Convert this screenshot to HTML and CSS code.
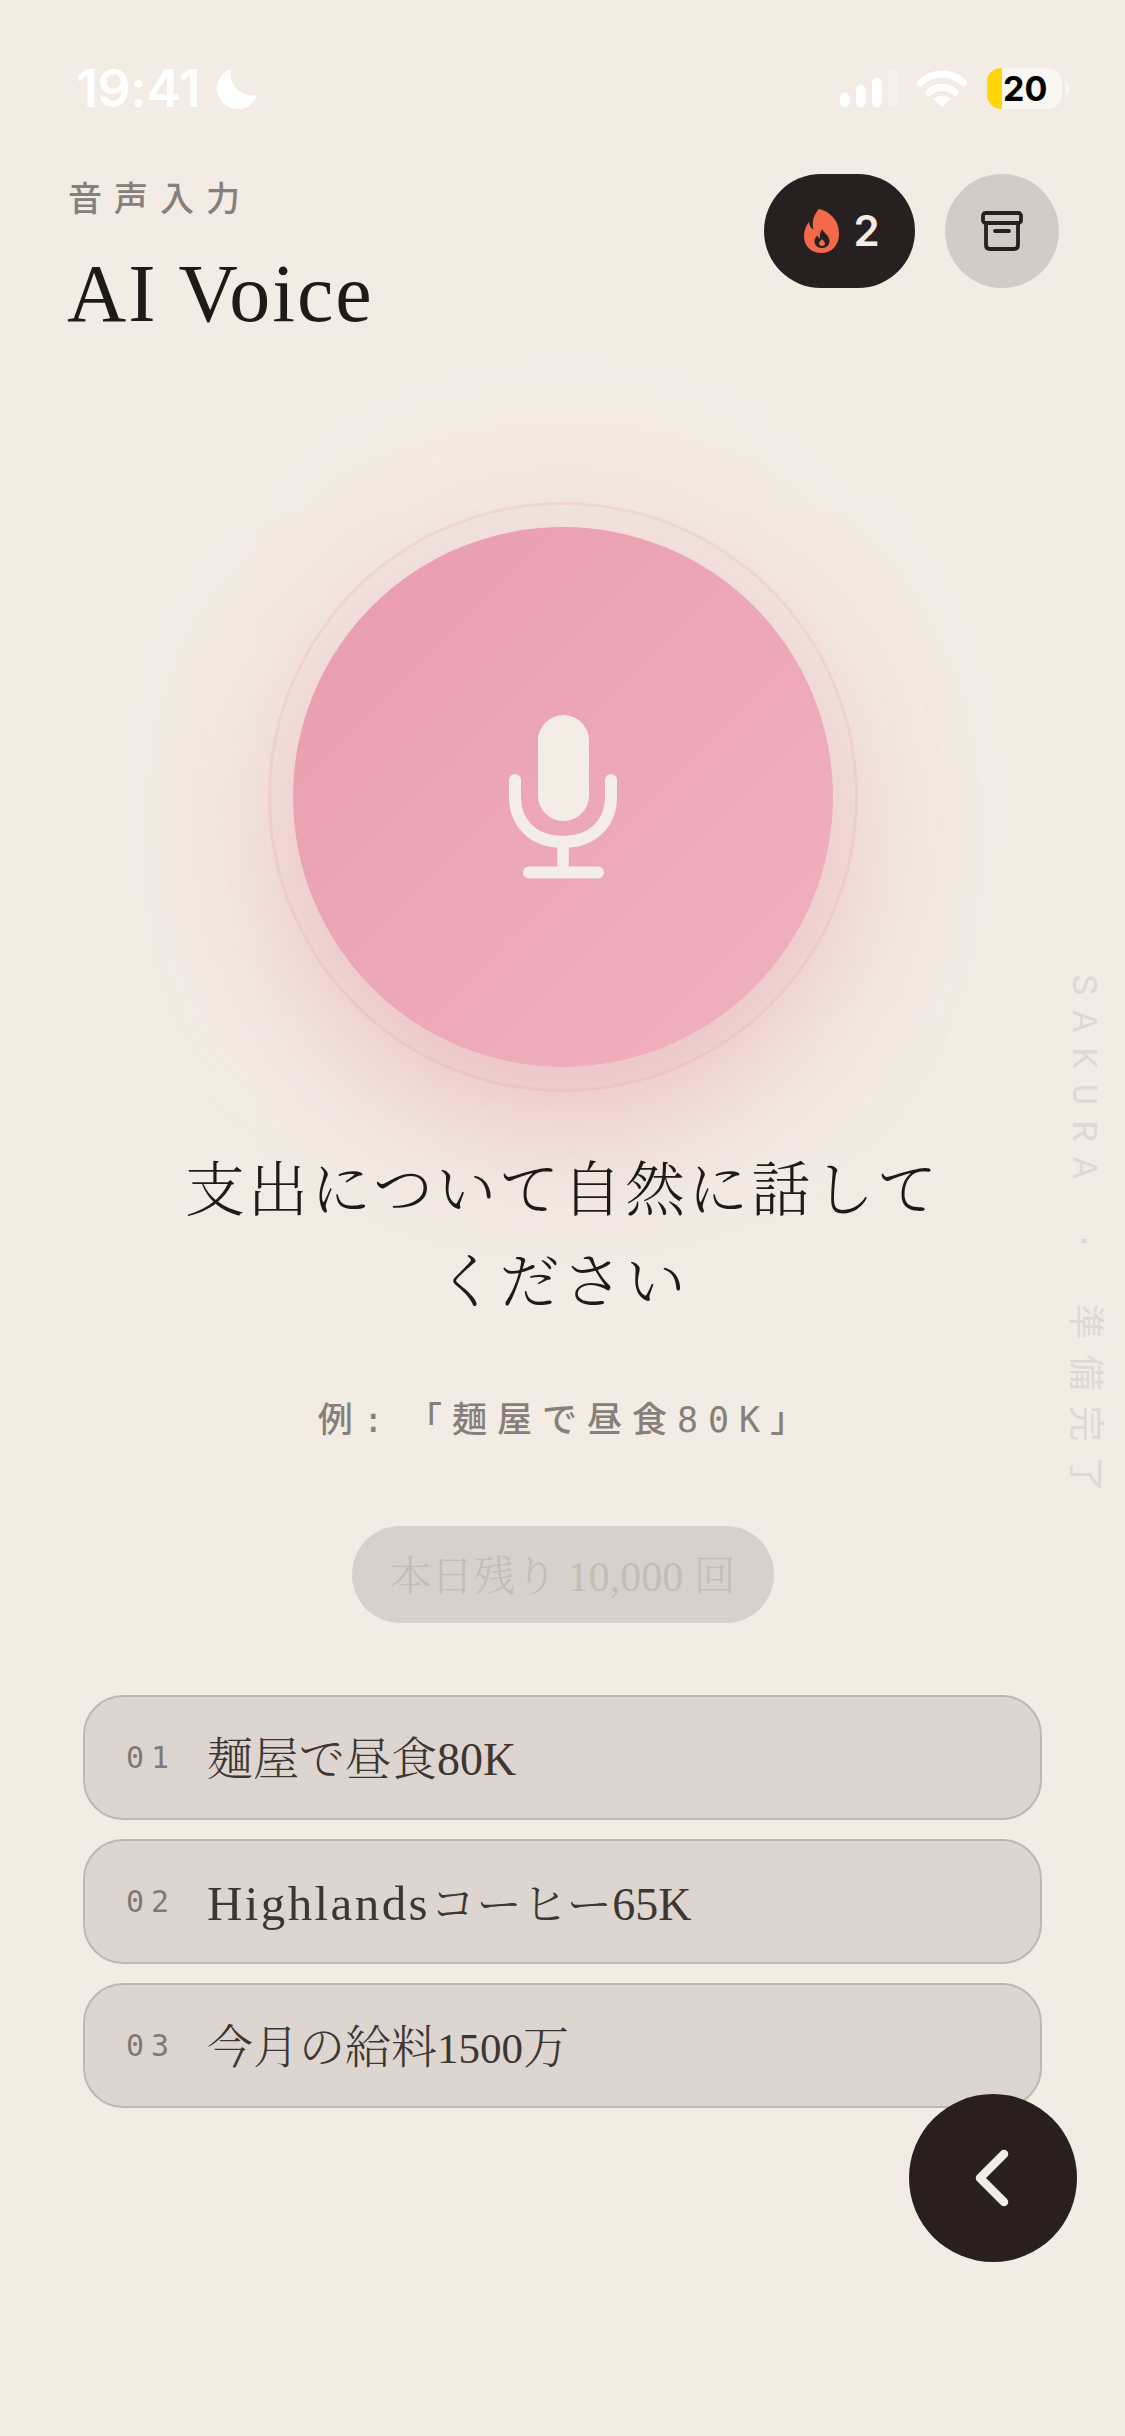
FILE: index.html
```html
<!DOCTYPE html>
<html lang="ja">
<head>
<meta charset="utf-8">
<title>AI Voice</title>
<link rel="stylesheet" href="styles.css">
</head>
<body>
<div class="screen">
  <div class="status">
    <div class="status-left">
      <span class="time">19:41</span>
      <svg class="moon" width="40" height="40" viewBox="0 0 40 40"><path d="M14 0A20.500 20.500 0 1 0 40 26 22 22 0 0 1 14 0Z" fill="#fff"/></svg>
    </div>
    <div class="status-right">
      <svg class="signal" width="58" height="37" viewBox="0 0 58 37">
        <rect x="0" y="23" width="10" height="14" rx="5" fill="#fff"/>
        <rect x="16" y="15" width="10" height="22" rx="5" fill="#fff"/>
        <rect x="32" y="8" width="10" height="29" rx="5" fill="#fff"/>
        <rect x="48" y="0" width="10" height="37" rx="5" fill="#fff" opacity=".35"/>
      </svg>
      <svg class="wifi" width="50" height="37" viewBox="0 0 50 37" fill="none">
        <path d="M3.500 13C15 1 35 1 46.500 13" stroke="#fff" stroke-width="7" stroke-linecap="round"/>
        <path d="M12 22.500C19 15.500 31 15.500 38 22.500" stroke="#fff" stroke-width="7" stroke-linecap="round"/>
        <path d="M25 37L16.500 29C21 24.500 29 24.500 33.500 29Z" fill="#fff"/>
      </svg>
      <div class="battery"><span class="battery-level"></span><span class="battery-text">20</span></div>
      <span class="battery-nub"></span>
    </div>
  </div>

  <header class="header">
    <div class="titles">
      <div class="eyebrow">音声入力</div>
      <h1 class="title">AI Voice</h1>
    </div>
    <div class="actions">
      <div class="streak">
        <svg width="36" height="44" viewBox="0 0 36 44"><path d="M15 0C21 1 36 8 35 26 34.500 37 27 44 17.500 44 7 44 0 37 0 27 0 20 4 14 5 13 5.500 17 7 19.500 9.500 20.500 7.500 13 10 5 15 0Z" fill="#f4694a"/><path d="M18.500 20C19 24 25.500 26 25.500 32 25.500 36.500 22 39 18 39 14 39 10.500 36.500 10.500 32.500 10.500 29.500 12 27.500 13.500 26.500 14 28.500 15 29.500 16 29.500 15.500 26 16 22.500 18.500 20Z" fill="#272020"/><path d="M18 30C19.500 31.500 21 33 21 34.500 21 36 19.800 37 18 37 16.200 37 15 36 15 34.500 15 33 16.500 31.500 18 30Z" fill="#f4694a"/></svg>
        <span class="streak-count">2</span>
      </div>
      <div class="archive">
        <svg width="42" height="40" viewBox="0 0 42 40" fill="none" stroke="#272020" stroke-width="3.800" stroke-linejoin="round" stroke-linecap="round"><rect x="2" y="2" width="38" height="10" rx="2.500"/><path d="M5 12V34C5 36.500 6.500 38 9 38H33C35.500 38 37 36.500 37 34V12"/><path d="M14 20H28"/></svg>
      </div>
    </div>
  </header>

  <main class="main">
    <div class="ring">
      <div class="mic-button">
        <svg width="108" height="164" viewBox="0 0 108 164" fill="none">
          <rect x="29" y="0" width="51" height="106" rx="25.500" fill="#f4ede6"/>
          <path d="M6 65V82C6 108 24 127 54 127 84 127 102 108 102 82V65" stroke="#f4ede6" stroke-width="12" stroke-linecap="round"/>
          <path d="M54 127V157" stroke="#f4ede6" stroke-width="11.500"/>
          <path d="M20 157.500H89" stroke="#f4ede6" stroke-width="12" stroke-linecap="round"/>
        </svg>
      </div>
    </div>
    <h2 class="prompt">支出について自然に話して<br>ください</h2>
    <p class="example">例: 「麺屋で昼食80K」</p>
    <div class="quota">本日残り 10,000 回</div>
    <ul class="samples">
      <li class="sample"><span class="num">01</span><span class="sample-text">麺屋で昼食80K</span></li>
      <li class="sample"><span class="num">02</span><span class="sample-text"><span class="latin-wide">Highlands</span>コーヒー65K</span></li>
      <li class="sample"><span class="num">03</span><span class="sample-text">今月の給料<span class="digits-tight">1500</span>万</span></li>
    </ul>
  </main>

  <div class="side-label">SAKURA · 準備完了</div>

  <button class="fab" type="button" aria-label="戻る">
    <svg width="44" height="62" viewBox="0 0 44 62" fill="none"><path d="M33 7L9 31 33 55" stroke="#f4ede6" stroke-width="8.500" stroke-linecap="round" stroke-linejoin="round"/></svg>
  </button>
</div>
</body>
</html>
```

FILE: styles.css
```css
* { box-sizing: border-box; }
html, body { margin: 0; padding: 0; }
body { background: #f3ece5; }

.screen {
  position: relative;
  width: 1125px;
  height: 2436px;
  overflow: hidden;
  display: flex;
  flex-direction: column;
  background: #f3ece5;
  font-family: "Liberation Serif", "Noto Serif CJK JP", "Noto Sans CJK JP", serif;
  color: #1d1a18;
}

.status {
  height: 174px;
  padding: 68px 56px 0 76px;
  display: flex;
  justify-content: space-between;
  align-items: flex-start;
  flex: none;
}
.status-left { display: flex; align-items: center; gap: 17px; height: 41px; }
.time { font: 600 52px/41px Inter, "Liberation Sans", sans-serif; color: #fff; letter-spacing: -.5px; }
.status-right { display: flex; align-items: center; height: 41px; }
.wifi { margin-left: 19px; }
.battery {
  margin-left: 20px;
  width: 75px;
  height: 41px;
  border-radius: 14px;
  background: #f8f6f1;
  display: flex;
  align-items: center;
}
.battery-level { width: 15px; height: 100%; background: #ffd60a; flex: none; border-radius: 14px 0 0 14px; }
.battery-text { font: 700 34px/38px Inter, "Liberation Sans", sans-serif; color: #000; margin-left: 1px; }
.battery-nub { width: 4px; height: 13px; margin-left: 3px; border-radius: 0 4px 4px 0; background: #f8f6f1; }

.header {
  flex: none;
  height: 328px;
  padding: 0 66px 0 67px;
  display: flex;
  justify-content: space-between;
  align-items: flex-start;
}
.titles { padding-top: 3px; }
.eyebrow {
  font: 500 34px/40px "Noto Sans CJK JP", sans-serif;
  letter-spacing: 12px;
  color: #86807b;
  padding-left: 1px;
}
.title {
  margin: 29px 0 0;
  font-size: 82px;
  font-weight: 400;
  line-height: 96px;
  letter-spacing: 2px;
  color: #1d1a18;
}
.actions { display: flex; gap: 30px; }
.streak {
  width: 151px;
  height: 114px;
  border-radius: 57px;
  background: #272020;
  display: flex;
  align-items: center;
  justify-content: center;
  gap: 13px;
  padding-left: 5px;
}
.streak-count { font: 600 42px/44px Inter, "Liberation Sans", sans-serif; color: #f4ede6; }
.archive {
  width: 114px;
  height: 114px;
  border-radius: 50%;
  background: #d2ccc6;
  display: flex;
  align-items: center;
  justify-content: center;
}

.main {
  flex: 1;
  display: flex;
  flex-direction: column;
  align-items: center;
}
.ring {
  width: 590px;
  height: 590px;
  border-radius: 50%;
  border: 3px solid rgba(232, 160, 170, .18);
  display: flex;
  align-items: center;
  justify-content: center;
  flex: none;
  background: rgba(240, 200, 200, .12);
  box-shadow: 0 0 200px 30px rgba(245, 225, 210, .38);
}
.mic-button {
  width: 540px;
  height: 540px;
  border-radius: 50%;
  background: linear-gradient(135deg, #e89cac 0%, #f1b2c0 100%);
  box-shadow: 0 50px 130px rgba(232, 150, 160, .5);
  display: flex;
  align-items: center;
  justify-content: center;
}
.prompt {
  margin: 53px 0 0;
  font-size: 60px;
  font-weight: 300;
  line-height: 92px;
  letter-spacing: 3px;
  text-align: center;
  color: #1d1a18;
}
.example {
  margin: 66px 0 0;
  padding-left: 8px;
  font: 500 35px/50px "DejaVu Sans Mono", "Noto Sans CJK JP", monospace;
  letter-spacing: 10px;
  word-spacing: -18px;
  color: #86807b;
}
.quota {
  margin-top: 81px;
  height: 97px;
  width: 422px;
  padding-top: 6px;
  border-radius: 48px;
  background: #d8d1cb;
  color: #c6bcb5;
  font-size: 42px;
  line-height: 91px;
  text-align: center;
  font-weight: 300;
}
.samples {
  list-style: none;
  margin: 72px 0 0;
  padding: 0;
  width: 959px;
  display: flex;
  flex-direction: column;
  gap: 19px;
}
.sample {
  height: 125px;
  border: 2px solid #bfb8b2;
  border-radius: 40px;
  background: #ddd6d0;
  display: flex;
  align-items: center;
  padding-left: 41px;
}
.num {
  width: 81px;
  font: 400 30px/36px "DejaVu Sans Mono", monospace;
  letter-spacing: 7px;
  color: #807a75;
}
.sample-text {
  margin-top: 5px;
  font-size: 46px;
  line-height: 54px;
  font-weight: 300;
  color: #3d3633;
}
.latin-wide { font-size: 49px; letter-spacing: 2.400px; }
.digits-tight { font-size: 43px; }

.side-label {
  position: absolute;
  top: 974px;
  left: 1062px;
  writing-mode: vertical-rl;
  text-orientation: sideways;
  font: 400 36px/40px "Liberation Mono", "Noto Sans CJK JP", monospace;
  letter-spacing: 15px;
  color: #dfd9d3;
  white-space: nowrap;
}

.fab {
  position: absolute;
  left: 909px;
  top: 2094px;
  width: 168px;
  height: 168px;
  border: 0;
  padding: 0;
  border-radius: 50%;
  background: #281f1e;
  display: flex;
  align-items: center;
  justify-content: center;
}
```
